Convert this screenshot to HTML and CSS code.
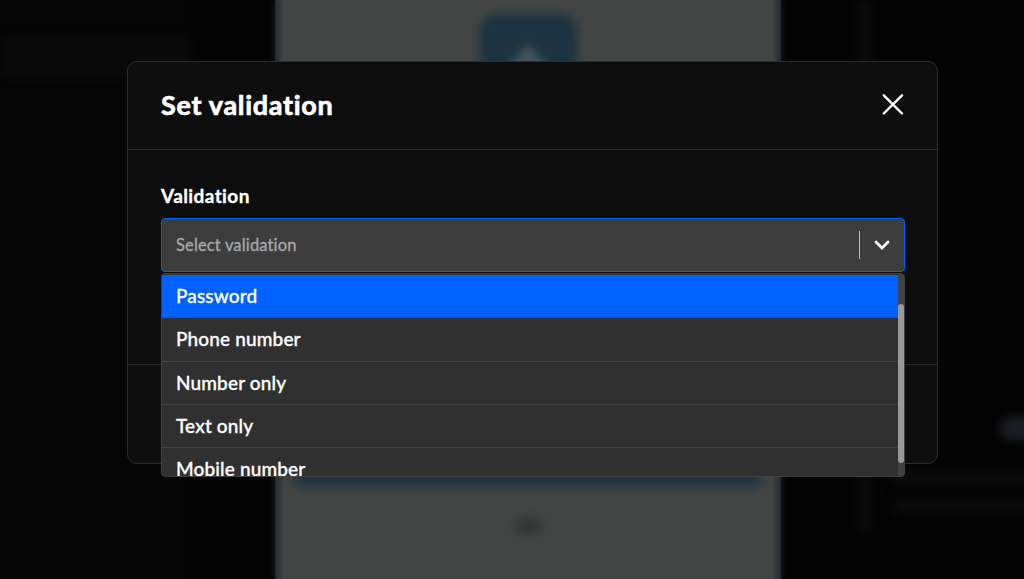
FILE: index.html
```
<!DOCTYPE html>
<html lang="en">
<head>
  <meta charset="UTF-8" />
  <meta name="viewport" content="width=device-width, initial-scale=1.0"/>
  <title>Set validation</title>
  <link rel="stylesheet" href="styles.css">
</head>
<body>

<!-- BLURRED EDITOR -->
<div class="editor" aria-hidden="true">
  <div class="sidebar">
    <div class="sidebar-item"></div>
  </div>
  <div class="phone">
    <div class="logo">
      <svg width="64" height="50" viewBox="0 0 64 50"><path d="M8 40 L32 12 L56 40 Z" fill="#46555d"/></svg>
    </div>
    <div class="phone-button"></div>
    <div class="dot"></div>
  </div>
  <div class="panel">
    <div class="divider"></div>
    <div class="settings">
      <div class="toggle"></div>
      <div class="line"></div>
      <div class="line"></div>
    </div>
  </div>
</div>

<!-- MODAL -->
<div class="modal" role="dialog">
  <header class="modal-header">
    <h2>Set validation</h2>
    <button class="close" aria-label="Close">
      <svg width="22" height="22" viewBox="0 0 22 22"><path d="M1.8 1.3 L20 19.5 M20 1.3 L1.8 19.5" /></svg>
    </button>
  </header>

  <div class="modal-body">
    <label>Validation</label>
    <div class="select">
      <div class="control">
        <span class="placeholder">Select validation</span>
        <span class="separator"></span>
        <svg class="chevron" width="18" height="12" viewBox="0 0 18 12"><path d="M3 3 L9 9 L15 3" /></svg>
      </div>
      <div class="menu">
        <ul class="options">
          <li class="active">Password</li>
          <li>Phone number</li>
          <li>Number only</li>
          <li>Text only</li>
          <li>Mobile number</li>
        </ul>
        <div class="scrollbar"><div class="thumb"></div></div>
      </div>
    </div>
  </div>

  <footer class="modal-footer"></footer>
</div>

</body>
</html>
```
FILE: styles.css
```
* {
  box-sizing: border-box;
}
body {
  margin: 0;
  height: 579px;
  overflow: hidden;
  position: relative;
  background: #040404;
  color: white;
  font-family: Lato, "Liberation Sans", sans-serif;
  font-variant-ligatures: none;
}

/* editor behind the modal */
.editor {
  position: absolute;
  inset: 0;
  display: grid;
  grid-template-columns: 275px 506px 1fr;
}
.sidebar {
  width: 190px;
  padding-top: 36px;
  background: #060606;
}
.sidebar-item {
  height: 42px;
  background: #0a0a0a;
  filter: blur(4px);
}
.phone {
  display: flex;
  flex-direction: column;
  align-items: center;
  padding-top: 14px;
  background: linear-gradient(90deg, #24282e, #434544 9px, #434544 497px, #24282e);
  box-shadow: 0 0 7px 0 #1c2026;
}
.logo {
  display: flex;
  justify-content: center;
  width: 97px;
  height: 96px;
  padding-top: 18px;
  border-radius: 18px;
  background: #1b3342;
  filter: blur(5px);
}
.phone-button {
  width: 466px;
  height: 50px;
  margin-top: 327px;
  border-radius: 8px;
  background: #1b3342;
  filter: blur(6px);
}
.dot {
  width: 27px;
  height: 17px;
  margin-top: 30px;
  border-radius: 9px;
  background: #343536;
  filter: blur(5px);
}
.panel {
  display: flex;
  gap: 22px;
  padding-left: 76px;
}
.divider {
  width: 15px;
  height: 532px;
  background: #0a0a0a;
  filter: blur(3px);
}
.settings {
  flex: 1;
  padding-top: 417px;
}
.toggle {
  width: 50px;
  height: 23px;
  margin-left: 106px;
  border-radius: 12px;
  background: #1b1e23;
  filter: blur(5px);
}
.line {
  height: 17px;
  margin-top: 11px;
  background: #0b0b0c;
  filter: blur(4px);
}
.toggle + .line {
  margin-top: 29px;
}

.modal {
  position: relative;
  width: 811px;
  height: 403px;
  margin: 61px 0 0 127px;
  display: flex;
  flex-direction: column;
  background: #0d0d0d;
  border: 1px solid #2b2d30;
  border-radius: 10px;
}
.modal-header {
  display: flex;
  align-items: center;
  justify-content: space-between;
  height: 88px;
  padding: 0 33px 2px;
  border-bottom: 1px solid #2d2d2e;
}
.modal-header h2 {
  margin: 0;
  font-size: 27px;
  line-height: 32px;
  font-weight: 700;
  letter-spacing: 0.7px;
  -webkit-text-stroke: 0.7px white;
}
.close {
  display: flex;
  padding: 0;
  border: none;
  background: none;
  cursor: pointer;
}
.close path {
  fill: none;
  stroke: white;
  stroke-width: 2.4;
  stroke-linecap: round;
}
.modal-body {
  flex: 1;
  padding: 34px 32px 0 33px;
}
.modal-body label {
  display: block;
  height: 34px;
  font-size: 19px;
  line-height: 24px;
  font-weight: 700;
  letter-spacing: 0.4px;
  -webkit-text-stroke: 0.3px white;
}
.modal-footer {
  height: 99px;
  border-top: 1px solid #2d2d2e;
}

.select {
  position: relative;
}
.control {
  display: flex;
  align-items: center;
  height: 54px;
  padding: 0 13px 0 14px;
  background: #3d3d3d;
  border: 1px solid #0061ff;
  border-radius: 4px;
}
.placeholder {
  flex: 1;
  color: #aaaaaa;
  font-size: 16.5px;
  letter-spacing: 0.15px;
  -webkit-text-stroke: 0.3px #aaaaaa;
}
.separator {
  width: 1px;
  height: 28px;
  margin-right: 13px;
  background: #b8b8b8;
}
.chevron path {
  fill: none;
  stroke: white;
  stroke-width: 2.8;
  stroke-linecap: round;
}
.menu {
  position: absolute;
  top: 55px;
  left: 0;
  right: 0;
  height: 204px;
  display: flex;
  overflow: hidden;
  background: #303030;
  border: 1px solid #424242;
  border-radius: 4px;
}
.options {
  flex: 1;
  margin: 0;
  padding: 1px 0 0;
  list-style: none;
}
.options li {
  height: 43.3px;
  padding-left: 14px;
  border-bottom: 1px solid #414141;
  font-size: 19px;
  line-height: 42px;
  font-weight: 500;
  letter-spacing: 0.14px;
  -webkit-text-stroke: 0.3px white;
}
.options .active {
  background: #0061ff;
  border-color: #2456a8;
}
.scrollbar {
  width: 6px;
  padding-top: 30px;
  background: #414141;
}
.thumb {
  height: 159px;
  border-radius: 3px;
  background: #999999;
}
```
